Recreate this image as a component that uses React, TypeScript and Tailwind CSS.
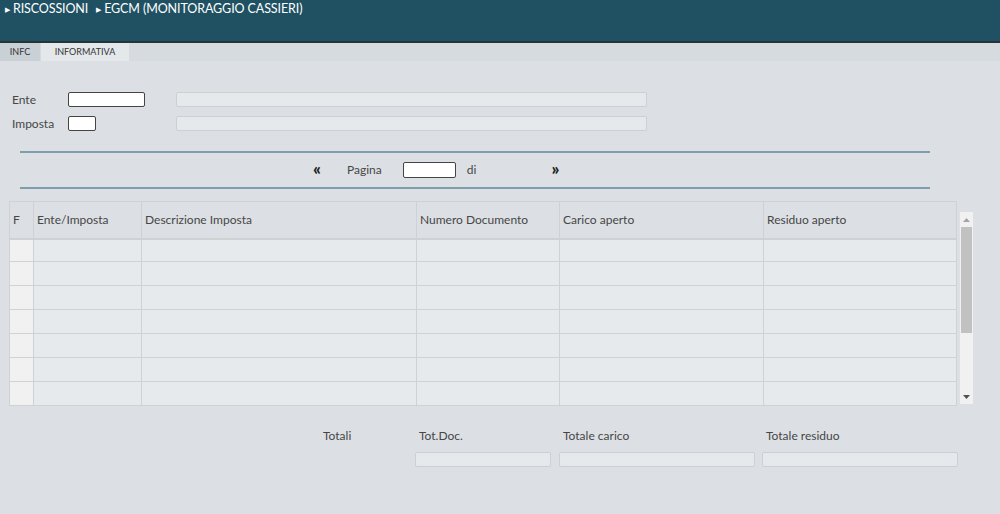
import React from "react";

const font = { fontFamily: "Lato, 'Open Sans', sans-serif" };

const cols = "grid grid-cols-[24px_108px_275px_143px_204px_1fr]";

function Row({ h }: { h: string }) {
  const cell = "border-r border-[#cfd2d4] h-full";
  return (
    <div className={`${cols} ${h} border-b border-[#cfd2d4]`}>
      <div className={`${cell} bg-[#f1f1f1]`} />
      <div className={cell} />
      <div className={cell} />
      <div className={cell} />
      <div className={cell} />
      <div />
    </div>
  );
}

export default function App() {
  return (
    <div className="w-[1000px] h-[514px] bg-[#dce0e4] text-[#464646] overflow-hidden" style={font}>
      {/* header */}
      <div className="h-[43px] bg-[#1f5163] border-b-2 border-[#27343a] pl-[5px] pt-0">
        <div className="flex items-center h-[18px] text-white text-[12.5px] tracking-[-0.1px]">
          <span className="text-[7px] mr-[3px]">▶</span>
          <span>RISCOSSIONI</span>
          <span className="text-[7px] ml-[8px] mr-[3px]">▶</span>
          <span>EGCM (MONITORAGGIO CASSIERI)</span>
        </div>
      </div>
      {/* tabs */}
      <div className="h-[18px] flex bg-[#d6dbdf] text-[9px] text-[#333]">
        <div className="w-[40px] bg-[#c9d0d6] flex items-center justify-center">INFC</div>
        <div className="w-[88px] bg-[#e4e8eb] flex items-center justify-center ml-[1px]">INFORMATIVA</div>
      </div>

      {/* form */}
      <div className="pt-[31px] text-[12px]">
        <div className="flex items-center h-[15px]">
          <div className="w-[68px] pl-[12px]">Ente</div>
          <div className="w-[77px] h-[15px] bg-white border border-[#444] rounded-[2px]" />
          <div className="ml-[31px] w-[471px] h-[15px] bg-[#e6e9ec] border border-[#cdd0d3] rounded-[2px]" />
        </div>
        <div className="flex items-center h-[15px] mt-[9px]">
          <div className="w-[68px] pl-[12px]">Imposta</div>
          <div className="w-[28px] h-[15px] bg-white border border-[#444] rounded-[2px]" />
          <div className="ml-[80px] w-[471px] h-[15px] bg-[#e6e9ec] border border-[#cdd0d3] rounded-[2px]" />
        </div>
      </div>

      {/* pagination */}
      <div className="ml-[20px] w-[910px] mt-[20px] border-t-2 border-b-2 border-[#7c9fab] h-[38px] flex items-center text-[12px]">
        <span className="ml-[293px] w-[10px] text-[17px] font-black leading-none text-[#222] -mt-[3px]">«</span>
        <span className="ml-[24px]">Pagina</span>
        <div className="ml-[21px] w-[53px] h-[16px] bg-white border border-[#444] rounded-[2px]" />
        <span className="ml-[11px]">di</span>
        <span className="ml-[75px] text-[17px] font-black leading-none text-[#222] -mt-[3px]">»</span>
      </div>

      {/* table */}
      <div className="flex mt-[12px]">
        <div className="ml-[9px] w-[948px] border-t border-l border-r border-[#cfd2d4] bg-[#e6eaed]">
          <div className={`${cols} h-[38px] bg-[#dce0e4] border-b-2 border-[#cfd2d4] text-[12px]`}>
            <div className="border-r border-[#cfd2d4] flex items-center pl-[3px]">F</div>
            <div className="border-r border-[#cfd2d4] flex items-center pl-[3px]">Ente/Imposta</div>
            <div className="border-r border-[#cfd2d4] flex items-center pl-[3px]">Descrizione Imposta</div>
            <div className="border-r border-[#cfd2d4] flex items-center pl-[3px]">Numero Documento</div>
            <div className="border-r border-[#cfd2d4] flex items-center pl-[3px]">Carico aperto</div>
            <div className="flex items-center pl-[3px]">Residuo aperto</div>
          </div>
          <Row h="h-[22px]" />
          <Row h="h-[24px]" />
          <Row h="h-[24px]" />
          <Row h="h-[24px]" />
          <Row h="h-[24px]" />
          <Row h="h-[24px]" />
          <Row h="h-[24px]" />
        </div>
        <div className="ml-[3px] mt-[11px] w-[13px] h-[192px] bg-[#f1f1f1] flex flex-col items-center">
          <div className="h-[15px] flex items-center">
            <svg width="7" height="4" viewBox="0 0 7 4"><polygon points="3.5,0 7,4 0,4" fill="#a3a3a3" /></svg>
          </div>
          <div className="w-[11px] h-[106px] bg-[#c1c1c1]" />
          <div className="flex-1" />
          <div className="h-[15px] flex items-center">
            <svg width="7" height="4" viewBox="0 0 7 4"><polygon points="0,0 7,0 3.5,4" fill="#505050" /></svg>
          </div>
        </div>
      </div>

      {/* totals */}
      <div className="mt-[22px] text-[12px]">
        <div className="flex h-[16px] items-center">
          <div className="ml-[323px] w-[96px]">Totali</div>
          <div className="w-[144px]">Tot.Doc.</div>
          <div className="w-[203px]">Totale carico</div>
          <div>Totale residuo</div>
        </div>
        <div className="flex mt-[8px]">
          <div className="ml-[415px] w-[136px] h-[15px] bg-[#e6e9ec] border border-[#cdd0d3] rounded-[2px]" />
          <div className="ml-[8px] w-[196px] h-[15px] bg-[#e6e9ec] border border-[#cdd0d3] rounded-[2px]" />
          <div className="ml-[7px] w-[196px] h-[15px] bg-[#e6e9ec] border border-[#cdd0d3] rounded-[2px]" />
        </div>
      </div>
    </div>
  );
}
